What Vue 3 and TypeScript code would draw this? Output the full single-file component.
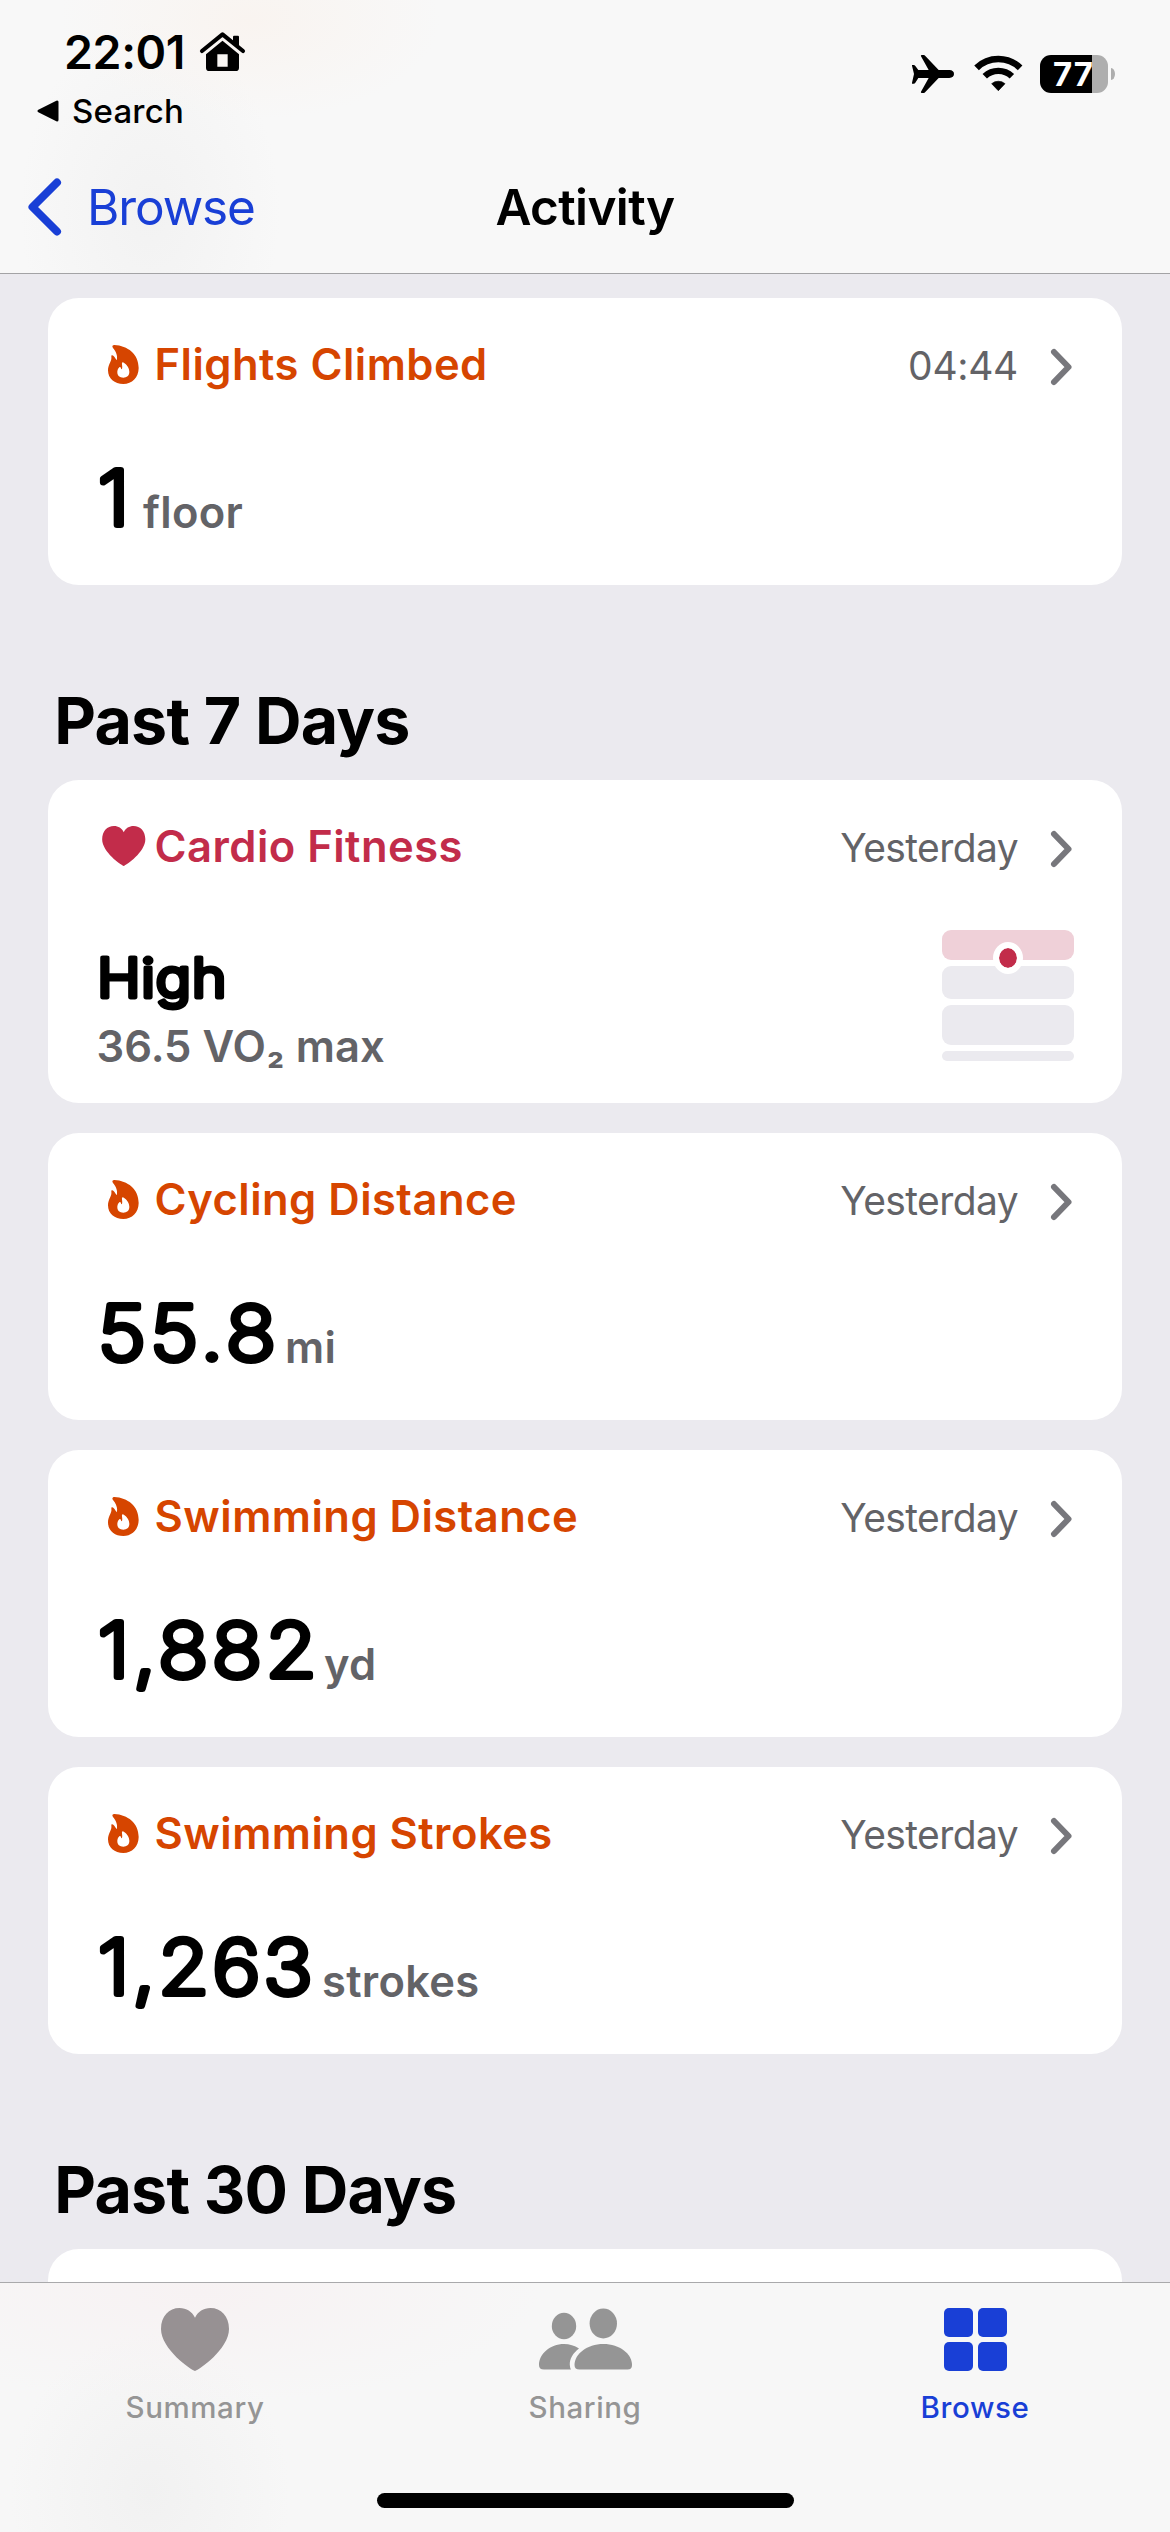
<script setup lang="ts">
interface Metric {
  title: string
  when: string
  kind: 'flame' | 'heart'
  value: string
  unit: string
  /** width reserved for the value, so the unit follows it */
  width: number
  tracking: number
}

const today: Metric = {
  title: 'Flights Climbed', when: '04:44', kind: 'flame', value: '1', unit: 'floor', width: 45, tracking: 0,
}

const week: Metric[] = [
  { title: 'Cardio Fitness', when: 'Yesterday', kind: 'heart', value: 'High', unit: '36.5 VO₂ max', width: 130, tracking: 0.9 },
  { title: 'Cycling Distance', when: 'Yesterday', kind: 'flame', value: '55.8', unit: 'mi', width: 187, tracking: 4.2 },
  { title: 'Swimming Distance', when: 'Yesterday', kind: 'flame', value: '1,882', unit: 'yd', width: 226, tracking: 3.6 },
  { title: 'Swimming Strokes', when: 'Yesterday', kind: 'flame', value: '1,263', unit: 'strokes', width: 224, tracking: 2.8 },
]

const sections = [
  { heading: '', items: [today] },
  { heading: 'Past 7 Days', items: week },
]

/** splits a unit around its subscript digit, which is set smaller */
const unitParts = (unit: string) => unit.split(/(₂)/)

const heartPath =
  'M34 63C30 62 0 41 0 21C0 8 8 0 18.5 0C25.5 0 31 3.5 34 9.7C37 3.5 42.5 0 49.5 0C60 0 68 8 68 21C68 41 38 62 34 63Z'
</script>

<template>
  <div class="app">
    <header class="top">
      <div class="status">
        <div class="status-left">
          <div class="clock">
            <span>22:01</span>
            <svg class="house" viewBox="600 96 135 117">
              <path d="M606 153L667.500 103L729 153" fill="none" stroke="#000" stroke-width="12.500" stroke-linecap="round" stroke-linejoin="round" />
              <path d="M699 128V110Q699 107 702 107H714Q717 107 717 110V142Z" />
              <path fill-rule="evenodd" d="M667.500 122L717 163V203Q717 213 707 213H628Q618 213 618 203V163ZM652 163V200H683V163Z" />
            </svg>
          </div>
          <div class="return">
            <svg class="tri" viewBox="0 0 22 22"><path d="M2 11L20 2V20Z" stroke="#000" stroke-width="3" stroke-linejoin="round" /></svg>
            <span>Search</span>
          </div>
        </div>
        <div class="status-right">
          <svg class="plane" viewBox="96 75 126 114">
            <path d="M96 105H101Q104 105 106 108L115 120H146L123 79Q121 75 126 75H131Q134 75 136 78L176 120H208Q222 121 222 132Q222 143 208 144H176L136 186Q134 189 131 189H126Q121 189 123 185L146 144H115L106 158Q104 161 101 161H96V158L102 132L96 107Z" />
          </svg>
          <svg class="wifi" viewBox="281 75 147 110">
            <path d="M288.700 113.400A94 94 0 0 1 419.300 113.400" fill="none" stroke="#000" stroke-width="20" />
            <path d="M313.300 138.900A58.500 58.500 0 0 1 394.700 138.900" fill="none" stroke="#000" stroke-width="19" />
            <path d="M354 182L334 161A31 31 0 0 1 374 161Z" stroke="#000" stroke-width="2" stroke-linejoin="round" />
          </svg>
          <div class="battery"><span>77</span></div>
          <i class="nub"></i>
        </div>
      </div>
      <nav class="nav">
        <a class="back">
          <svg class="back-arrow" viewBox="0 0 34 58"><path d="M29 4.500L4.500 29L29 53.500" fill="none" stroke="currentColor" stroke-width="8" stroke-linecap="round" stroke-linejoin="round" /></svg>
          <span>Browse</span>
        </a>
        <h1>Activity</h1>
      </nav>
    </header>

    <main class="list">
      <section v-for="s in sections" :key="s.heading">
        <h2 v-if="s.heading">{{ s.heading }}</h2>
        <div class="cards">
          <article v-for="m in s.items" :key="m.title" class="card" :class="m.kind">
            <div class="card-head">
              <div class="glyph">
                <svg v-if="m.kind === 'flame'" class="flame-icon" viewBox="203 191 93 117">
                  <path fill-rule="evenodd" d="M222 191C262 193 295 218 295 260C295 288 275 308 249 308C223 308 203 292 203 267C203 252 211 243 213 233C214 228 212 224 214 222C218 219 225 229 229 237C233 226 228 211 218 200C214 195 217 191 222 191ZM248 243C261 250 267 262 267 272C267 283 259 289 249 289C238 289 231 283 231 273C231 264 236 257 239 257C242 257 242 264 244 264C248 260 244 249 245 245Q246 242 248 243Z" />
                </svg>
                <svg v-else class="heart-icon" viewBox="0 0 68 63"><path :d="heartPath" /></svg>
              </div>
              <h3>{{ m.title }}</h3>
              <span class="when" :class="{ time: m.when.includes(':') }">{{ m.when }}</span>
              <svg class="chev" viewBox="0 0 24 38"><path d="M4 4L18.500 19L4 34" fill="none" stroke="#77777c" stroke-width="6" stroke-linecap="round" stroke-linejoin="round" /></svg>
            </div>
            <div v-if="m.kind === 'flame'" class="reading">
              <svg class="value" :style="{ width: m.width + 'px' }">
                <text x="0" y="57" transform="scale(1.1 1)" :letter-spacing="m.tracking">{{ m.value }}</text>
              </svg>
              <span class="unit">{{ m.unit }}</span>
            </div>
            <div v-else class="level">
              <div>
                <svg class="grade" :style="{ width: m.width + 'px' }">
                  <text x="-0.800" y="41.700" transform="scale(1.1 1)" :letter-spacing="m.tracking">{{ m.value }}</text>
                </svg>
                <p class="unit"><span v-for="(p, i) in unitParts(m.unit)" :key="i" :class="{ sub: p === '₂' }">{{ p }}</span></p>
              </div>
              <div class="bands">
                <i class="b1"></i><i class="b2"></i><i class="b3"></i><i class="b4"></i>
                <b class="dot"></b>
              </div>
            </div>
          </article>
        </div>
      </section>
      <section>
        <h2>Past 30 Days</h2>
        <div class="cards"><article class="card"></article></div>
      </section>
    </main>

    <footer class="tabs">
      <a class="tab summary">
        <svg width="68" height="63" viewBox="0 0 68 63"><path :d="heartPath" /></svg>
        <span>Summary</span>
      </a>
      <a class="tab">
        <svg width="93" height="63" viewBox="0 0 93 63">
          <ellipse cx="25" cy="18" rx="12.200" ry="13.200" />
          <ellipse cx="64.300" cy="15.500" rx="13.700" ry="15" />
          <path d="M0 57C0 46 11 36 25 36C30.500 36 35.500 37.500 40 40.500C34 45 30.500 51 30.800 57Q31 60 32 61.500H5Q0 61.500 0 57Z" />
          <path d="M40.500 61.500Q35.500 61.500 35.500 57C35.500 46 48 36 64.300 36C81 36 93 46 93 57Q93 61.500 88.500 61.500Z" />
        </svg>
        <span>Sharing</span>
      </a>
      <a class="tab active">
        <svg width="63" height="63" viewBox="0 0 63 63">
          <rect width="29" height="29" rx="5" /><rect x="34" width="29" height="29" rx="5" />
          <rect y="34" width="29" height="29" rx="5" /><rect x="34" y="34" width="29" height="29" rx="5" />
        </svg>
        <span>Browse</span>
      </a>
      <div class="home"></div>
    </footer>
  </div>
</template>

<style>
body { margin: 0; }
</style>

<style scoped>
.app {
  display: flex;
  flex-direction: column;
  width: 1170px;
  height: 2532px;
  overflow: hidden;
  background: #ebeaef;
  color: #000;
  font-family: Inter, "Liberation Sans", sans-serif;
}
h1, h2, h3, p { margin: 0; }
svg { display: block; flex: none; overflow: visible; }

.top {
  flex: none;
  box-sizing: border-box;
  height: 274px;
  border-bottom: 1px solid #a3a3a5;
  background:
    radial-gradient(ellipse 190px 100px at 250px 20px, #f9f4f0, rgba(249, 244, 240, 0)),
    radial-gradient(ellipse 130px 190px at 150px 210px, #f2f2f2, rgba(242, 242, 242, 0)),
    #f8f8f8;
}
.status {
  box-sizing: border-box;
  display: flex;
  justify-content: space-between;
  height: 141px;
  padding: 29px 55px 0 37px;
}
.clock {
  display: flex;
  height: 46px;
  padding-left: 27px;
  font-size: 46.5px;
  font-weight: 600;
  line-height: 46px;
  letter-spacing: -0.4px;
}
.house { width: 45px; height: 39px; margin: 3px 0 0 15px; }
.return {
  display: flex;
  align-items: center;
  height: 34px;
  margin-top: 19px;
  font-size: 33px;
  font-weight: 500;
  line-height: 34px;
  letter-spacing: 0.2px;
}
.tri { width: 22px; height: 22px; margin-right: 13px; }
.status-right { display: flex; height: 38px; margin-top: 26px; align-items: flex-start; }
.plane { width: 42px; height: 38px; margin-right: 20px; }
.wifi { width: 49px; height: 36.700px; margin-right: 17px; }
.battery {
  box-sizing: border-box;
  width: 68px;
  height: 38px;
  padding-left: 13px;
  border-radius: 11px;
  background: linear-gradient(to right, #000 52px, #aeaeae 52px);
  color: #fff;
  font-size: 33px;
  font-weight: 700;
  line-height: 38px;
  letter-spacing: 1px;
}
.nub { width: 4px; height: 12px; margin: 13px 0 0 3px; border-radius: 0 4px 4px 0 / 0 6px 6px 0; background: #aeaeae; }

.nav { position: relative; display: flex; align-items: center; justify-content: center; height: 132px; }
.back {
  position: absolute;
  left: 28px;
  top: 36px;
  display: flex;
  align-items: center;
  height: 60px;
  color: #193fd6;
  font-size: 49.5px;
  line-height: 60px;
  letter-spacing: -1.1px;
}
.back-arrow { width: 34px; height: 58px; margin-right: 25px; }
h1 { font-size: 49.5px; font-weight: 600; line-height: 60px; letter-spacing: -0.65px; }

.list { flex: 1; min-height: 0; overflow: hidden; padding: 24px 48px 0; }
h2 {
  margin: 100.500px 0 24.500px 6.300px;
  font-size: 64.5px;
  font-weight: 700;
  line-height: 70px;
  letter-spacing: -0.8px;
}
.cards { display: flex; flex-direction: column; gap: 30px; }
.card {
  box-sizing: border-box;
  height: 287px;
  padding: 0 48px 0 50px;
  border-radius: 31px;
  background: #fff;
}
.card.heart { height: 323px; }
.card-head { display: flex; align-items: center; height: 132px; }
.glyph { display: flex; flex: none; justify-content: center; width: 51px; margin-right: 5.500px; }
.flame-icon { width: 31px; height: 39px; fill: #d64500; }
.heart-icon { width: 43.500px; height: 40px; fill: #c22c4a; }
h3 {
  flex: 1;
  color: #d64500;
  font-size: 43.5px;
  font-weight: 600;
  line-height: 60px;
  letter-spacing: 0.48px;
  white-space: nowrap;
}
.heart h3 { color: #c22c4a; }
.when { margin: 4px 32px 0 0; color: #636367; font-size: 39px; line-height: 50px; letter-spacing: -0.6px; }
.when.time { letter-spacing: -0.3px; }
.chev { width: 24px; height: 38px; margin-top: 6px; }

.reading { display: flex; align-items: baseline; margin-top: 38px; }
.value { height: 60px; }
.value text {
  font-size: 75px;
  font-weight: 200;
  stroke: #000;
  stroke-width: 6px;
  stroke-linejoin: round;
}
.unit { color: #636367; font-size: 43.5px; font-weight: 600; line-height: 50px; letter-spacing: 0.3px; }
.level { display: flex; justify-content: space-between; padding-top: 18px; }
.grade { height: 44px; margin-top: 24.500px; }
.grade text {
  font-size: 53px;
  font-weight: 300;
  stroke: #000;
  stroke-width: 4.800px;
  stroke-linejoin: round;
}
.level .unit { height: 50px; margin: 22.500px 0 0 -1.500px; letter-spacing: 0; white-space: pre; }
.unit .sub { margin: 0 0.500px 0 1px; font-size: 38px; font-weight: 700; line-height: 1; }
.bands { position: relative; display: flex; flex-direction: column; width: 132px; gap: 6px; }
.bands i { border-radius: 9px; background: #ebeaef; }
.bands .b1 { height: 30px; background: #efd0d8; }
.bands .b2 { height: 33px; }
.bands .b3 { height: 40px; }
.bands .b4 { height: 10px; border-radius: 5px; }
.dot {
  position: absolute;
  left: 51px;
  top: 11.500px;
  width: 18px;
  height: 20px;
  border: 6px solid #fff;
  border-radius: 50%;
  background: #c22c4a;
  background-clip: padding-box;
}

.tabs {
  position: relative;
  flex: none;
  box-sizing: border-box;
  display: grid;
  grid-template-columns: repeat(3, 1fr);
  height: 250px;
  padding-top: 25px;
  border-top: 1px solid #a9a9ab;
  background:
    radial-gradient(ellipse 340px 110px at 200px 10px, #f7f2f3, rgba(247, 242, 243, 0)),
    radial-gradient(ellipse 140px 160px at 150px 210px, #f1f1f1, rgba(241, 241, 241, 0)),
    #f7f7f7;
}
.tab { display: flex; flex-direction: column; align-items: center; fill: #959595; color: #959595; }
.tab.summary { fill: #979193; }
.tab.active { fill: #193fd6; color: #193fd6; }
.tab span { margin-top: 18px; font-size: 29.5px; font-weight: 500; line-height: 36px; letter-spacing: 0.6px; }
.home { position: absolute; left: 377px; bottom: 24px; width: 417px; height: 15px; border-radius: 8px; background: #000; }
</style>
